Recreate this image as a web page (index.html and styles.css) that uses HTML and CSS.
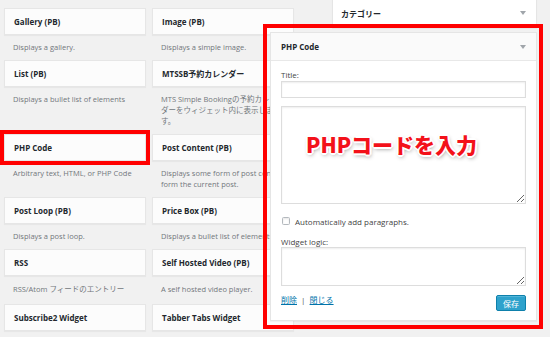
FILE: index.html
```html
<!DOCTYPE html>
<html lang="ja">
<head>
    <meta charset="UTF-8">
    <meta name="viewport" content="width=device-width, initial-scale=1.0">
    <link rel="stylesheet" href="styles.css">
</head>
<body>
    <div class="screen">
        <!-- 利用できるウィジェット -->
        <div class="available">
            <div class="item">
                <div class="item-top">Gallery (PB)</div>
                <div class="item-desc">Displays a gallery.</div>
            </div>
            <div class="item">
                <div class="item-top">Image (PB)</div>
                <div class="item-desc">Displays a simple image.</div>
            </div>
            <div class="item">
                <div class="item-top">List (PB)</div>
                <div class="item-desc">Displays a bullet list of elements</div>
            </div>
            <div class="item">
                <div class="item-top">MTSSB予約カレンダー</div>
                <div class="item-desc">MTS Simple Bookingの予約カレン<br>ダーをウィジェット内に表示しま<br>す。</div>
            </div>
            <div class="item">
                <div class="item-top marked">PHP Code</div>
                <div class="item-desc">Arbitrary text, HTML, or PHP Code</div>
            </div>
            <div class="item">
                <div class="item-top">Post Content (PB)</div>
                <div class="item-desc">Displays some form of post content<br>form the current post.</div>
            </div>
            <div class="item">
                <div class="item-top">Post Loop (PB)</div>
                <div class="item-desc">Displays a post loop.</div>
            </div>
            <div class="item">
                <div class="item-top">Price Box (PB)</div>
                <div class="item-desc">Displays a bullet list of elements</div>
            </div>
            <div class="item">
                <div class="item-top">RSS</div>
                <div class="item-desc jp">RSS/Atom フィードのエントリー</div>
            </div>
            <div class="item">
                <div class="item-top">Self Hosted Video (PB)</div>
                <div class="item-desc jp">A self hosted video player.</div>
            </div>
            <div class="item">
                <div class="item-top">Subscribe2 Widget</div>
                <div class="item-desc"></div>
            </div>
            <div class="item">
                <div class="item-top">Tabber Tabs Widget</div>
                <div class="item-desc"></div>
            </div>
        </div>

        <!-- サイドバー -->
        <div class="sidebar">
            <div class="side-widget">
                <div class="side-head">カテゴリー<span class="arrow"></span></div>
            </div>

            <div class="side-widget expanded">
                <div class="side-head">PHP Code<span class="arrow"></span></div>
                <div class="panel-body">
                    <label class="field-label">Title:</label>
                    <input class="text-input" type="text">
                    <div class="code-wrap">
                        <textarea class="code-area"></textarea>
                        <div class="annot">PHPコードを入力</div>
                    </div>
                    <div class="check-row">
                        <span class="check"></span>
                        <span>Automatically add paragraphs.</span>
                    </div>
                    <label class="field-label logic-label">Widget logic:</label>
                    <textarea class="logic-area"></textarea>
                    <div class="panel-foot">
                        <div class="links"><a href="#">削除</a> <span class="sep">|</span> <a href="#">閉じる</a></div>
                        <button class="save-btn">保存</button>
                    </div>
                </div>
                <div class="frame"></div>
            </div>
        </div>
    </div>
</body>
</html>
```

FILE: styles.css
```css
* {
    margin: 0;
    padding: 0;
    box-sizing: border-box;
}

body {
    background: #f1f1f1;
    font-family: 'Open Sans', 'Noto Sans CJK JP', sans-serif;
    color: #23282d;
    height: 337px;
    overflow: hidden;
}

.screen {
    display: flex;
    align-items: flex-start;
    padding: 8px 0 0 4px;
}

/* ウィジェット一覧 */
.available {
    flex-shrink: 0;
    width: 290px;
    display: grid;
    grid-template-columns: 142px 142px;
    column-gap: 6px;
}

.item {
    display: flex;
    flex-direction: column;
    min-width: 0;
}

.item-top {
    height: 27px;
    background: #fcfcfc;
    border: 1px solid #e6e6e6;
    box-shadow: 0 1px 1px rgba(0, 0, 0, 0.04);
    display: flex;
    align-items: center;
    padding: 0 9px;
    font-size: 8px;
    font-weight: 700;
    white-space: nowrap;
}

.item-top.marked {
    outline: 4px solid #f00;
}

.item-desc {
    padding: 7px 2px 7px 9px;
    font-size: 7.5px;
    line-height: 11px;
    color: #72777c;
    white-space: nowrap;
}

.item-desc.jp {
    padding-top: 8px;
    padding-bottom: 9px;
}

/* サイドバー */
.sidebar {
    flex-shrink: 0;
    width: 205px;
    margin-left: 38px;
    margin-top: -10px;
    display: flex;
    flex-direction: column;
    gap: 4px;
}

.side-widget {
    background: #fff;
    border: 1px solid #e5e5e5;
    box-shadow: 0 1px 1px rgba(0, 0, 0, 0.04);
}

.side-head {
    height: 28px;
    display: flex;
    align-items: center;
    justify-content: space-between;
    padding: 0 10px 0 8px;
    font-size: 8px;
    font-weight: 700;
}

.arrow {
    width: 0;
    height: 0;
    border-left: 3px solid transparent;
    border-right: 3px solid transparent;
    border-top: 4px solid #a0a5aa;
}

.expanded {
    position: relative;
    margin-left: -62px;
}

.expanded .side-head {
    height: 28px;
    padding-left: 10px;
    background: #fafafa;
    border-bottom: 1px solid #e8e8e8;
}

.panel-body {
    padding: 9px 10px 9px;
    font-size: 8px;
    color: #444;
}

.field-label {
    display: block;
    line-height: 10px;
    margin-bottom: 1px;
}

.text-input,
.code-area,
.logic-area {
    display: block;
    width: 100%;
    border: 1px solid #ddd;
    box-shadow: inset 0 1px 2px rgba(0, 0, 0, 0.07);
    background: #fff;
    outline: none;
}

.text-input {
    height: 17px;
}

.code-wrap {
    position: relative;
    margin-top: 8px;
}

.code-area {
    height: 98px;
    resize: vertical;
}

.annot {
    position: absolute;
    left: 25px;
    top: 26px;
    font-family: 'Noto Sans CJK JP', sans-serif;
    font-size: 21px;
    font-weight: 900;
    line-height: 24px;
    color: #f3111a;
    text-shadow:
        1px 1px 0 #fff, -1px -1px 0 #fff, 1px -1px 0 #fff, -1px 1px 0 #fff,
        2px 0 0 #fff, -2px 0 0 #fff, 0 2px 0 #fff, 0 -2px 0 #fff,
        1px 2px 4px rgba(0, 0, 0, 0.45);
}

.check-row {
    display: flex;
    align-items: center;
    gap: 5px;
    height: 12px;
    margin-top: 11px;
    padding-left: 1px;
}

.check {
    width: 8px;
    height: 8px;
    border: 1px solid #b4b9be;
    border-radius: 1.5px;
    background: #fff;
    box-shadow: inset 0 1px 2px rgba(0, 0, 0, 0.1);
}

.logic-label {
    margin-top: 10px;
    margin-bottom: 0;
}

.logic-area {
    height: 39px;
    resize: vertical;
}

.panel-foot {
    display: flex;
    justify-content: space-between;
    align-items: flex-start;
    margin-top: 9px;
}

.links {
    line-height: 10px;
    font-size: 8px;
}

.links a {
    color: #0073aa;
}

.sep {
    color: #555;
    margin: 0 2px;
}

.save-btn {
    width: 30px;
    height: 16px;
    background: #2ea2cc;
    border: 1px solid #0e80ab;
    border-radius: 2px;
    color: #fff;
    font-family: 'Noto Sans CJK JP', sans-serif;
    font-size: 8px;
    box-shadow: inset 0 1px 0 rgba(120, 200, 230, 0.5);
}

/* 赤枠（注釈） */
.frame {
    position: absolute;
    top: -9px;
    left: -8px;
    right: -7px;
    bottom: -9px;
    border: 4px solid #f00;
    pointer-events: none;
}
```
